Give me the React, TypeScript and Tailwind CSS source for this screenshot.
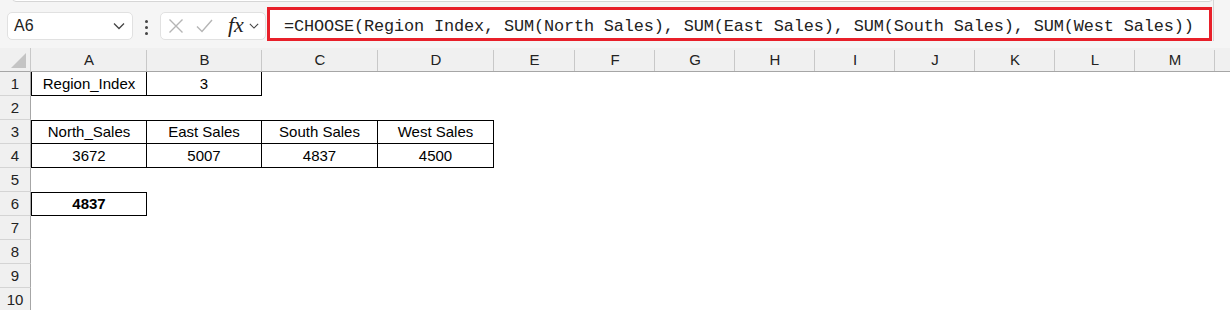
import React from "react";

const COLS = ["A", "B", "C", "D", "E", "F", "G", "H", "I", "J", "K", "L", "M", ""];

type Cell = { v: string; b?: boolean; bold?: boolean };

const DATA: Record<string, Cell> = {
  "1,0": { v: "Region_Index", b: true },
  "1,1": { v: "3", b: true },
  "3,0": { v: "North_Sales", b: true },
  "3,1": { v: "East Sales", b: true },
  "3,2": { v: "South Sales", b: true },
  "3,3": { v: "West Sales", b: true },
  "4,0": { v: "3672", b: true },
  "4,1": { v: "5007", b: true },
  "4,2": { v: "4837", b: true },
  "4,3": { v: "4500", b: true },
  "6,0": { v: "4837", b: true, bold: true },
};

const isB = (r: number, c: number) => !!DATA[`${r},${c}`]?.b;

const FORMULA =
  "=CHOOSE(Region Index, SUM(North Sales), SUM(East Sales), SUM(South Sales), SUM(West Sales))";

function Chevron({ className }: { className?: string }) {
  return (
    <svg className={className} width="12" height="8" viewBox="0 0 12 8" fill="none">
      <path d="M1 1.5 L6 6.5 L11 1.5" stroke="#444" strokeWidth="1.3" />
    </svg>
  );
}

export default function App() {
  const rows = [1, 2, 3, 4, 5, 6, 7, 8, 9, 10];
  return (
    <div
      className="w-[1230px] h-[310px] overflow-hidden bg-white text-black"
      style={{ fontFamily: '"Liberation Sans", Arial, sans-serif' }}
    >
      {/* toolbar */}
      <div className="relative h-[48px] bg-[#f5f5f5] flex items-start">
        <div className="absolute left-[12px] right-[17px] top-[-10px] h-[12px] bg-white border border-[#d6d6d6] rounded-[4px]" />
        <div className="ml-[7px] mt-[12px] w-[126px] h-[28px] bg-white border border-[#e1e1e1] rounded-[5px] flex items-center justify-between pl-[6px] pr-[7px]">
          <span className="text-[16px] text-[#222]">A6</span>
          <Chevron />
        </div>
        <div className="w-[27px] mt-[20px] flex flex-col items-center gap-[3px]">
          <div className="w-[3px] h-[3px] bg-[#444] rounded-full" />
          <div className="w-[3px] h-[3px] bg-[#444] rounded-full" />
          <div className="w-[3px] h-[3px] bg-[#444] rounded-full" />
        </div>
        <div className="mt-[12px] w-[106px] h-[28px] bg-white border border-[#e1e1e1] rounded-[5px] flex items-center pl-[7px]">
          <svg width="16" height="16" viewBox="0 0 16 16" fill="none">
            <path d="M1.5 1.5 L14.5 14.5 M14.5 1.5 L1.5 14.5" stroke="#b5b5b5" strokeWidth="1.4" />
          </svg>
          <svg className="ml-[12px]" width="17" height="14" viewBox="0 0 17 14" fill="none">
            <path d="M1 7.5 L6 12.5 L16 1" stroke="#b5b5b5" strokeWidth="1.4" />
          </svg>
          <span
            className="ml-[15px] text-[22px] italic leading-none text-[#222] -mt-[3px]"
            style={{ fontFamily: '"Liberation Serif", "Times New Roman", serif' }}
          >
            fx
          </span>
          <Chevron className="ml-[5px] w-[10px]" />
        </div>
        <div className="ml-px mt-[7px] w-[945px] h-[34px] bg-white border-[3px] border-[#e8202a] flex items-center pl-[14px] pt-[6px]">
          <span
            className="text-[16.9px] tracking-[-0.14px] leading-none text-[#222] whitespace-nowrap"
            style={{ fontFamily: '"Liberation Mono", "Courier New", monospace' }}
          >
            {FORMULA}
          </span>
        </div>
        <div className="absolute left-[1213px] top-0 h-[41px] w-px bg-[#d6d6d6]" />
      </div>

      {/* grid */}
      <div className="grid grid-cols-[31px_116px_115px_116px_116px_81px_80px_80px_80px_80px_80px_80px_80px_80px_1fr]">
        {/* header row */}
        <div className="relative h-[24px] bg-[#f0f0f0] border-b border-[#a6a6a6] border-r border-r-[#c8c8c8]">
          <div className="absolute right-[4px] bottom-[3px] w-0 h-0 border-l-[15px] border-l-transparent border-b-[15px] border-b-[#c4c4c4]" />
        </div>
        {COLS.map((c, i) => (
          <div
            key={c + i}
            className="relative h-[24px] bg-[#f0f0f0] border-b border-[#a6a6a6] flex items-center justify-center text-[15px] text-[#222] pt-px"
          >
            {c}
            {c && <div className="absolute right-0 top-[2px] bottom-0 w-px bg-[#c8c8c8]" />}
          </div>
        ))}

        {rows.map((r) => (
          <React.Fragment key={r}>
            <div className="h-[24px] bg-[#f0f0f0] border-r border-[#a6a6a6] border-b border-b-[#d4d4d4] flex items-center justify-center text-[15px] text-[#222] pt-px">
              {r}
            </div>
            {COLS.map((_, c) => {
              const cell = DATA[`${r},${c}`];
              const b = isB(r, c);
              const cls = [
                "h-[24px] flex items-center justify-center text-[15px] whitespace-nowrap pt-px",
                b ? "border-r border-b border-black" : "",
                b && !isB(r - 1, c) && r !== 1 ? "border-t border-t-black" : "",
                b && !isB(r, c - 1) ? "border-l border-l-black" : "",
                cell?.bold ? "font-bold" : "",
              ].join(" ");
              return (
                <div key={c} className={cls}>
                  {cell?.v ?? ""}
                </div>
              );
            })}
          </React.Fragment>
        ))}
      </div>
    </div>
  );
}
